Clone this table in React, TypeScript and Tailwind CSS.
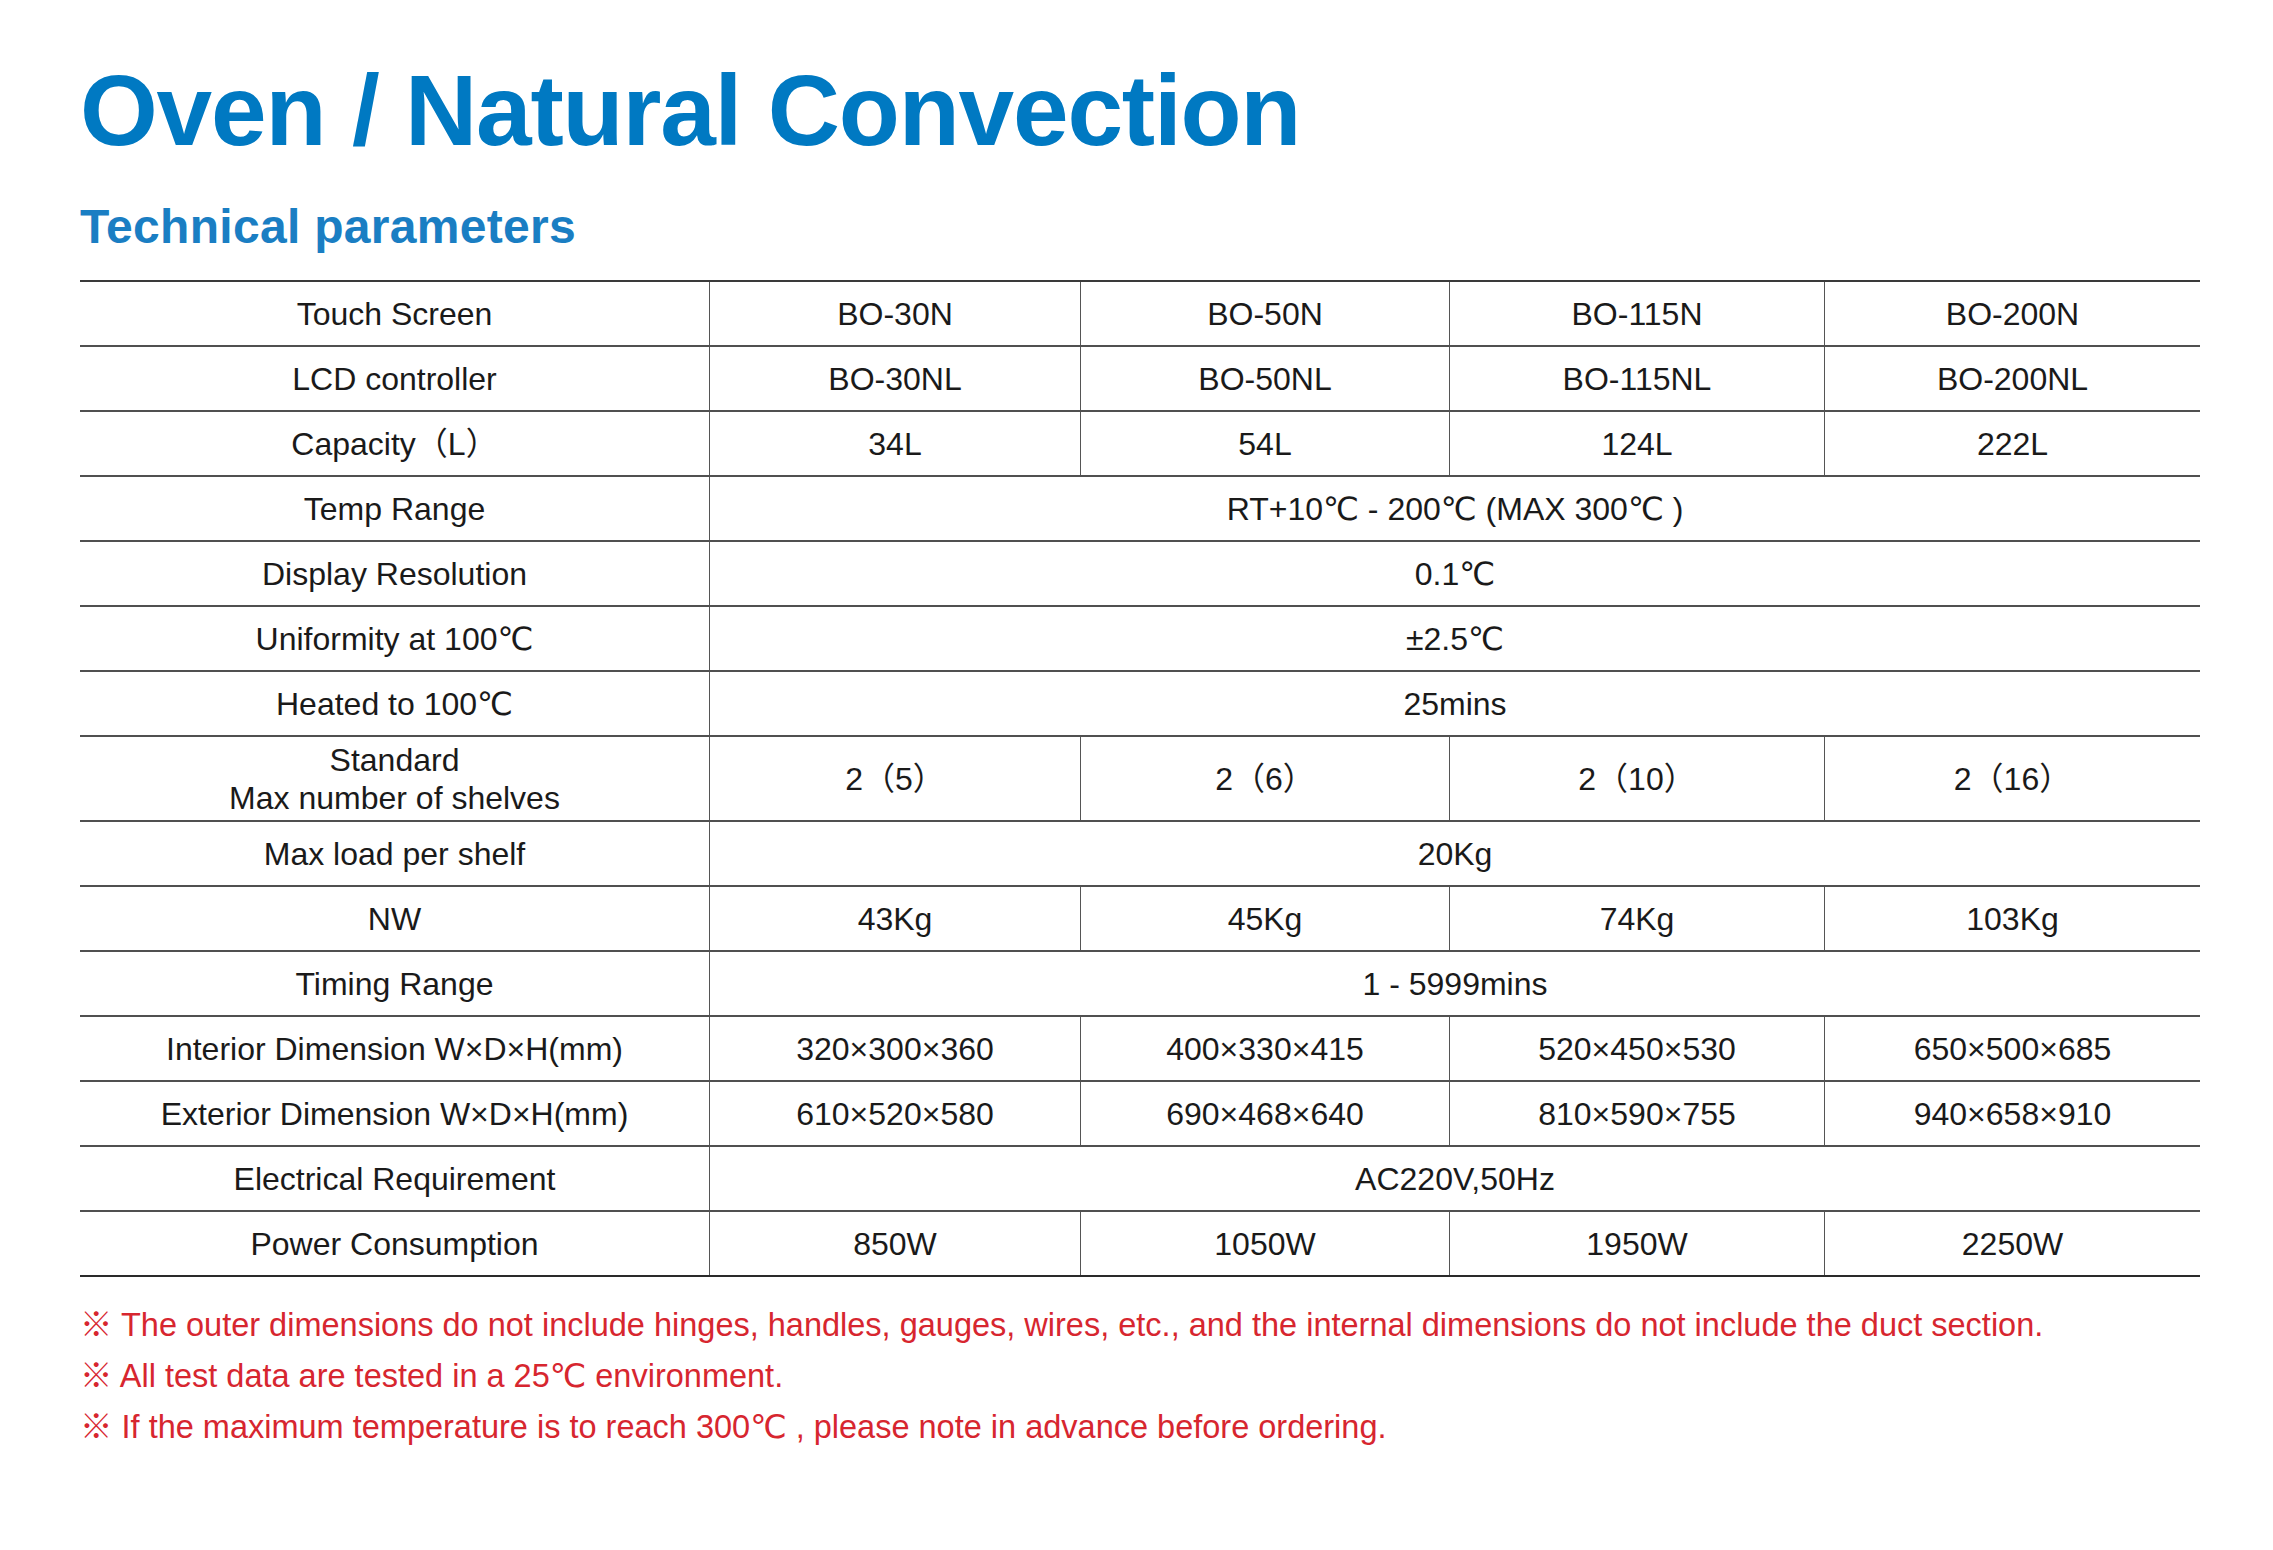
import React from "react";

type Row = {
  label: React.ReactNode;
  values: string[];
  tall?: boolean;
};

const rows: Row[] = [
  { label: "Touch Screen", values: ["BO-30N", "BO-50N", "BO-115N", "BO-200N"] },
  { label: "LCD controller", values: ["BO-30NL", "BO-50NL", "BO-115NL", "BO-200NL"] },
  { label: "Capacity（L）", values: ["34L", "54L", "124L", "222L"] },
  { label: "Temp Range", values: ["RT+10℃ - 200℃ (MAX 300℃ )"] },
  { label: "Display Resolution", values: ["0.1℃"] },
  { label: "Uniformity at 100℃", values: ["±2.5℃"] },
  { label: "Heated to 100℃", values: ["25mins"] },
  {
    label: (
      <>
        Standard
        <br />
        Max number of shelves
      </>
    ),
    values: ["2（5）", "2（6）", "2（10）", "2（16）"],
    tall: true,
  },
  { label: "Max load per shelf", values: ["20Kg"] },
  { label: "NW", values: ["43Kg", "45Kg", "74Kg", "103Kg"] },
  { label: "Timing Range", values: ["1 - 5999mins"] },
  {
    label: "Interior Dimension W×D×H(mm)",
    values: ["320×300×360", "400×330×415", "520×450×530", "650×500×685"],
  },
  {
    label: "Exterior Dimension W×D×H(mm)",
    values: ["610×520×580", "690×468×640", "810×590×755", "940×658×910"],
  },
  { label: "Electrical Requirement", values: ["AC220V,50Hz"] },
  { label: "Power Consumption", values: ["850W", "1050W", "1950W", "2250W"] },
];

const notes = [
  "The outer dimensions do not include hinges, handles, gauges, wires, etc., and the internal dimensions do not include the duct section.",
  "All test data are tested in a 25℃ environment.",
  "If the maximum temperature is to reach 300℃ , please note in advance before ordering.",
];

export default function App() {
  return (
    <div className="w-[2273px] h-[1550px] bg-white pl-[80px] pt-[60px] font-['Liberation_Sans','DejaVu_Sans','Noto_Sans_CJK_SC',sans-serif]">
      <h1 className="text-[100px] leading-[100px] font-bold tracking-[-1.2px] text-[#0079c2] h-[100px] whitespace-nowrap">
        Oven / Natural Convection
      </h1>
      <h2 className="mt-[43px] text-[48px] leading-[48px] h-[48px] font-bold tracking-[0.3px] text-[#1a7ec3]">
        Technical parameters
      </h2>
      <div className="mt-[29px] w-[2120px] border-t-2 border-[#3a3a3a] text-[32px] text-[#1a1a1a]">
        {rows.map((r, i) => {
          const last = i === rows.length - 1;
          return (
            <div
              key={i}
              className={`grid grid-cols-[629px_371px_369px_375px_376px] ${
                r.tall ? "h-[85px]" : "h-[65px]"
              } border-b-2 ${last ? "border-[#2a2a2a]" : "border-[#505050]"}`}
            >
              <div className="flex items-center justify-center text-center leading-[38px]">
                <span>{r.label}</span>
              </div>
              {r.values.length === 1 ? (
                <div className="col-span-4 flex items-center justify-center border-l border-[#555]">
                  {r.values[0]}
                </div>
              ) : (
                r.values.map((v, j) => (
                  <div
                    key={j}
                    className="flex items-center justify-center border-l border-[#555]"
                  >
                    {v}
                  </div>
                ))
              )}
            </div>
          );
        })}
      </div>
      <div className="mt-[23px] flex flex-col text-[32.5px] leading-[51px] text-[#d7262f]">
        {notes.map((n, i) => (
          <div key={i} className="h-[51px] whitespace-nowrap">
            <span className="leading-none font-['Noto_Sans_CJK_SC',sans-serif]">※</span> {n}
          </div>
        ))}
      </div>
    </div>
  );
}
